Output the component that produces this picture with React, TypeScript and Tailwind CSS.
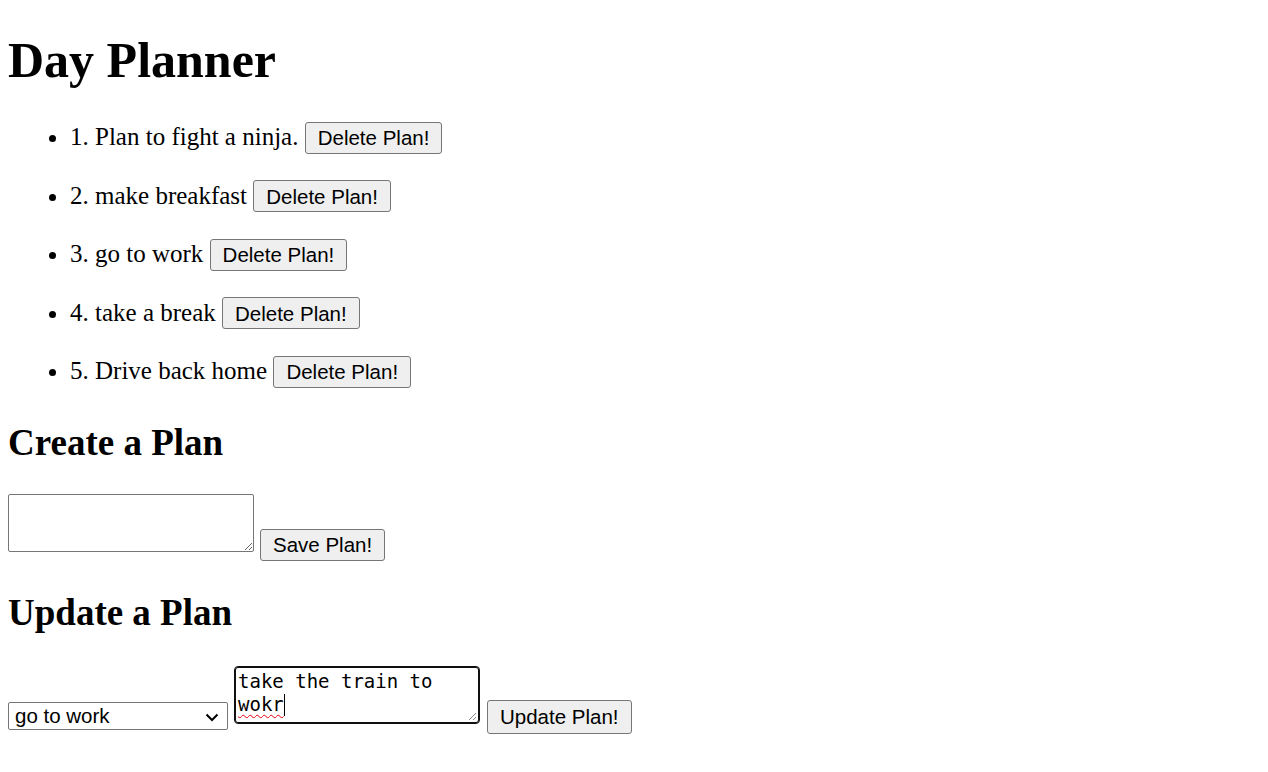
const PLANS = ["Plan to fight a ninja.", "make breakfast", "go to work", "take a break", "Drive back home"];

function PlainButton({ label, className = "" }: { label: string; className?: string }) {
  return (
    <button
      type="button"
      className={
        "inline-block rounded-[3px] border border-[#767676] bg-[#efefef] px-[12px] align-baseline font-['Liberation_Sans',Arial,sans-serif] text-[20.5px] leading-[23px] text-black " +
        className
      }
    >
      {label}
    </button>
  );
}

function Grip() {
  return (
    <svg className="pointer-events-none absolute bottom-[2px] right-[2px]" width="10" height="10" viewBox="0 0 10 10">
      <path d="M9 2 L2 9 M9 6 L6 9" stroke="#8a8a8a" strokeWidth="1" />
    </svg>
  );
}

export default function App() {
  return (
    <div className="min-h-[772px] bg-white px-2 font-['Liberation_Serif','Times_New_Roman',serif] text-black">
      <h1 className="pt-[33px] text-[50px] font-bold leading-[55px]">Day Planner</h1>

      <ul className="mt-[32px] list-disc pl-[62px] text-[25px]">
        {PLANS.map((p, i) => (
          <li key={p} className="mb-[24px] leading-[34.5px] last:mb-0">
            {i + 1}. {p} <PlainButton label="Delete Plan!" className="h-[32px]" />
          </li>
        ))}
      </ul>

      <h2 className="mt-[33px] text-[37px] font-bold leading-[41px]">Create a Plan</h2>

      <div className="mt-[31px] flex items-end gap-[6px]">
        <textarea
          className="mb-[9px] h-[58px] w-[246px] rounded-[2px] border border-[#767676] bg-white p-[3px] font-['DejaVu_Sans_Mono',monospace] text-[19px] leading-[23px]"
          defaultValue=""
        />
        <PlainButton label="Save Plan!" className="h-[32px]" />
      </div>

      <h2 className="mt-[31px] text-[37px] font-bold leading-[41px]">Update a Plan</h2>

      <div className="mt-[33px] flex items-end">
        <div className="relative mb-[4px] flex h-[28px] w-[220px] items-center rounded-[2px] border border-[#767676] bg-white pl-[6px] font-['Liberation_Sans',Arial,sans-serif] text-[20.5px] leading-[23px]">
          <span>go to work</span>
          <svg className="absolute right-[8px] top-[10px]" width="14" height="9" viewBox="0 0 14 9">
            <path d="M1.5 1.5 L7 7 L12.5 1.5" fill="none" stroke="#000" strokeWidth="2" />
          </svg>
        </div>
        <div className="relative mb-[10px] ml-[6px] h-[58px] w-[246px] rounded-[4px] border border-[#101010] bg-white p-[3px] font-['DejaVu_Sans_Mono',monospace] text-[19px] leading-[23px] shadow-[inset_0_0_0_1px_#101010]">
          <div>take the train to</div>
          <div>
            <span className="underline decoration-red-600 decoration-wavy decoration-1 underline-offset-[3px]">wokr</span>
            <span className="inline-block h-[22px] w-px bg-black align-[-5px]" />
          </div>
          <Grip />
        </div>
        <PlainButton label="Update Plan!" className="ml-[7px] h-[34px]" />
      </div>
    </div>
  );
}
